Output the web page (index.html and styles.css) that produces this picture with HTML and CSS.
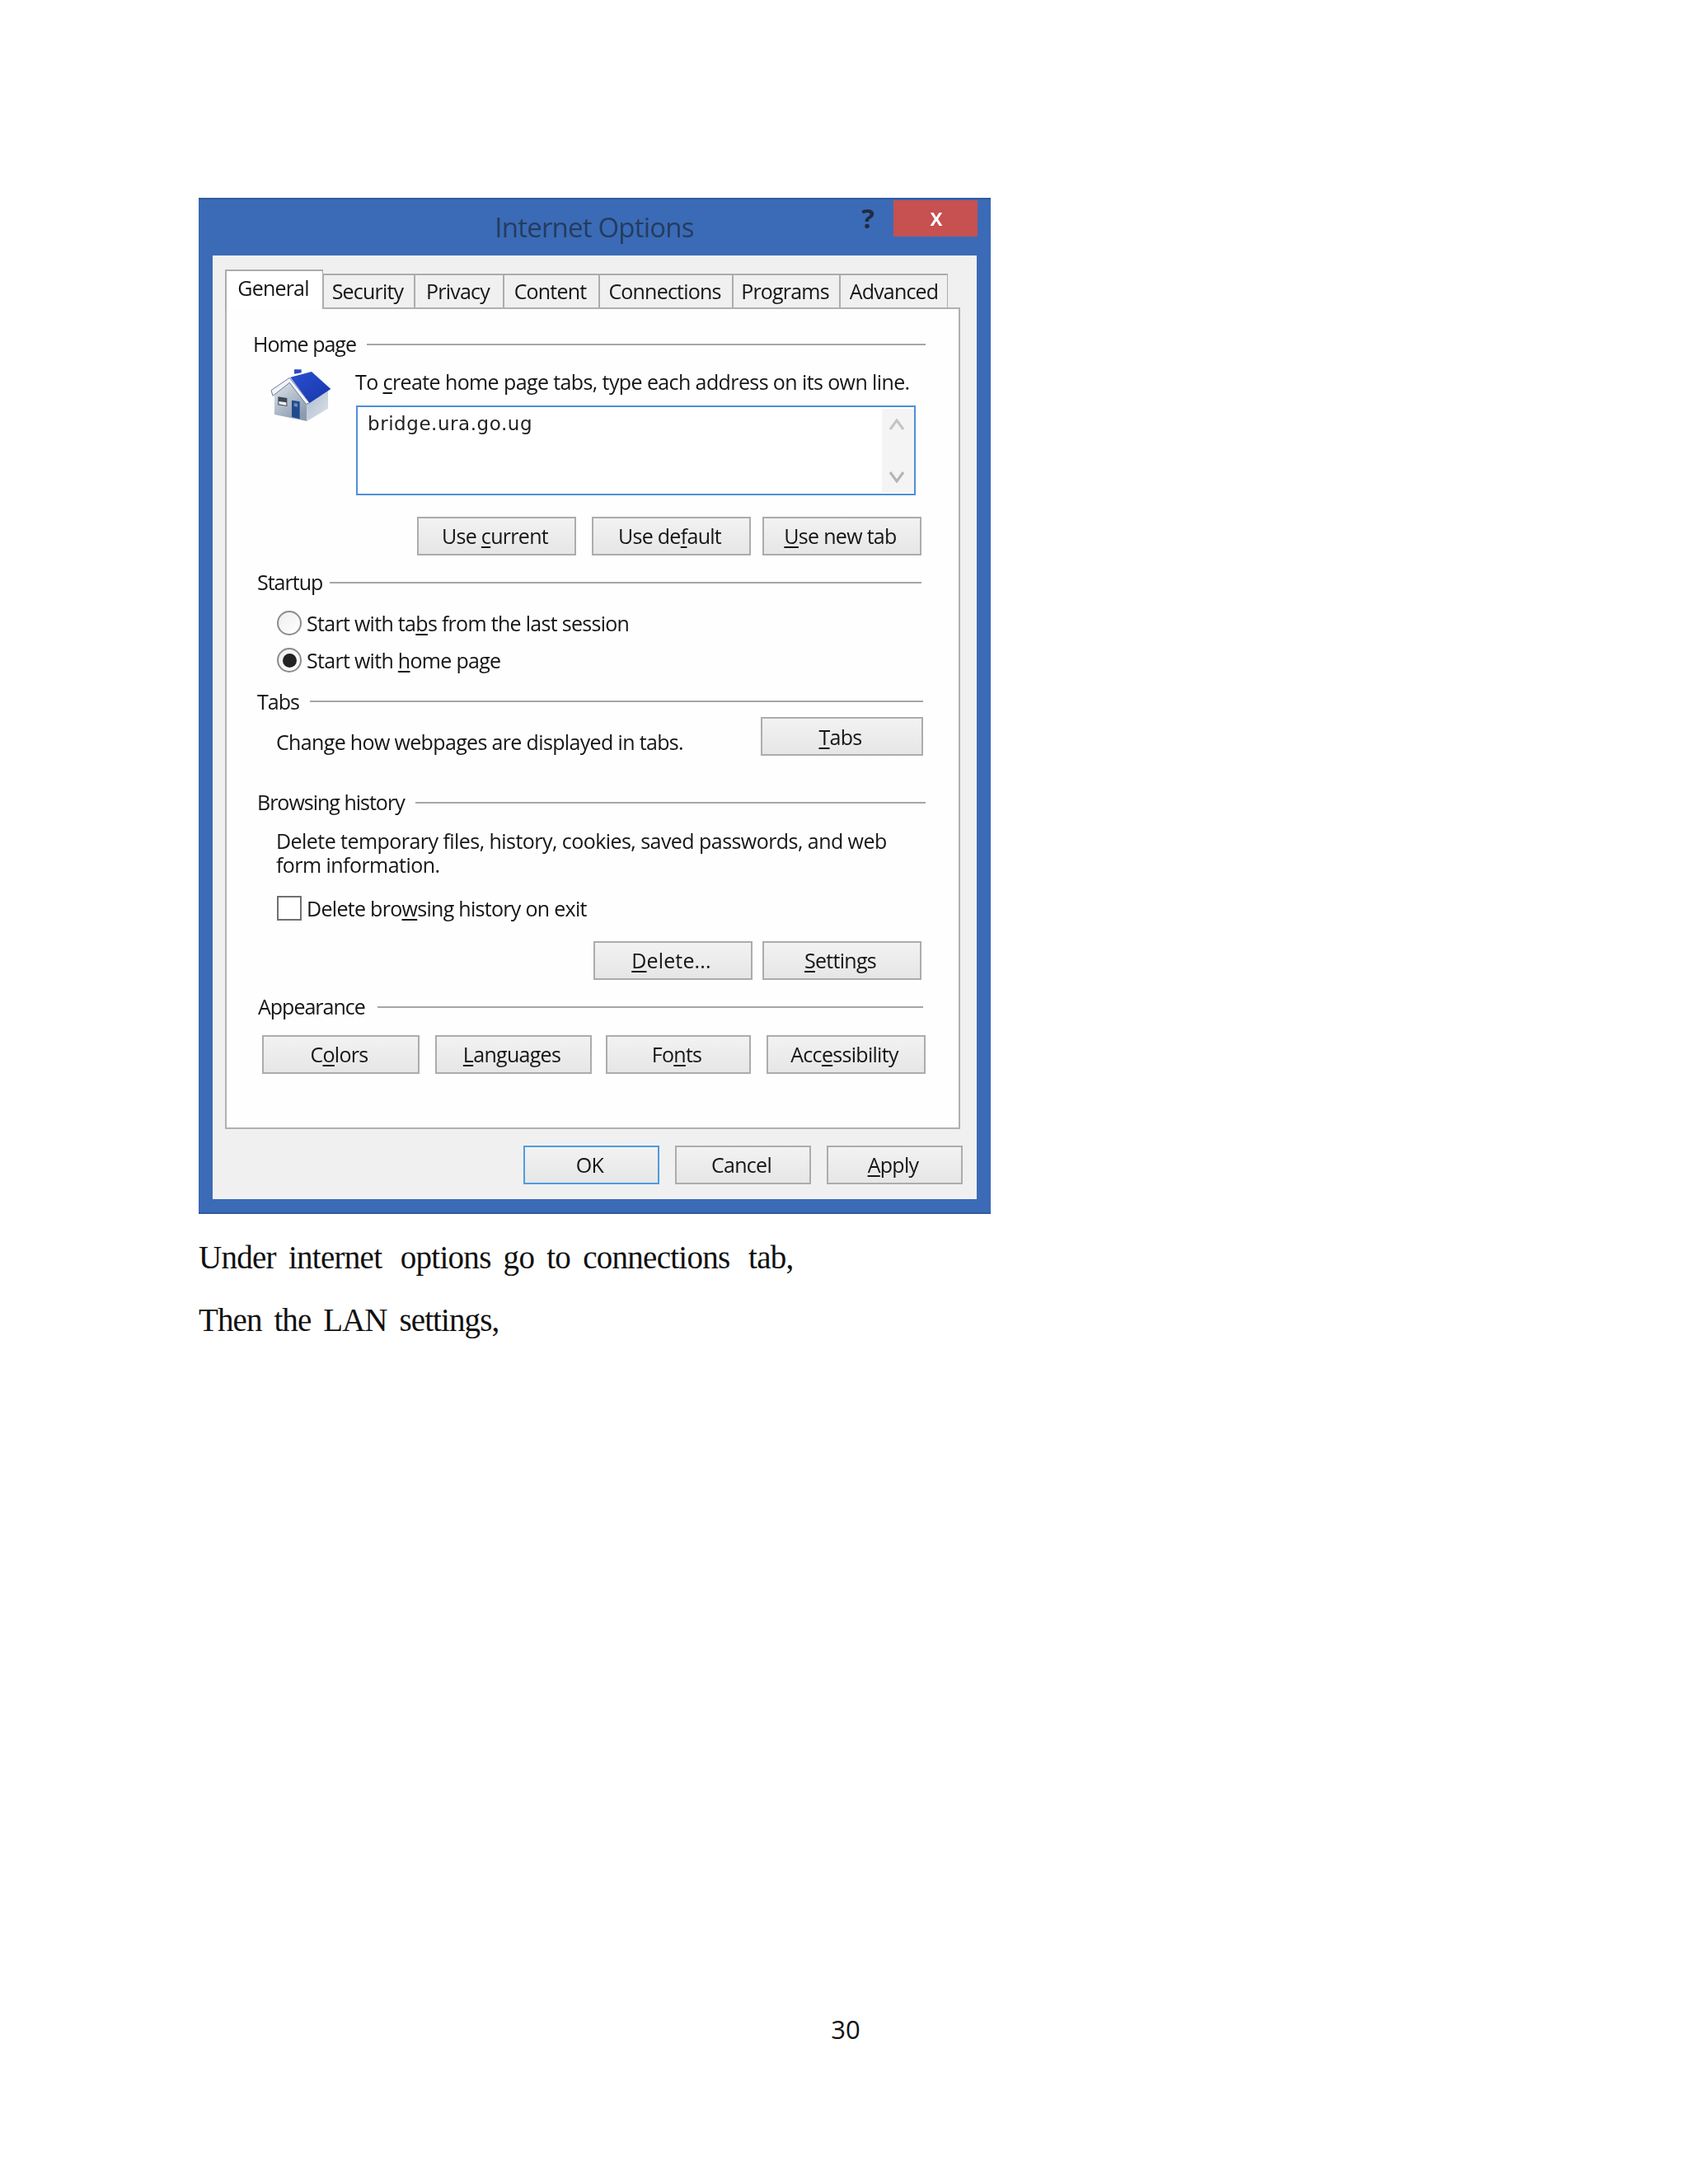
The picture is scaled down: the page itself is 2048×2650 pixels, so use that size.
FILE: index.html
```html
<!DOCTYPE html>
<html lang="en">
<head>
<meta charset="utf-8">
<title>Internet Options</title>
<link rel="stylesheet" href="styles.css">
</head>
<body>
<main class="page">
  <section class="dialog">
    <header class="titlebar">
      <div class="title">Internet Options</div>
      <div class="help">?</div>
      <div class="close">x</div>
    </header>
    <div class="panel">
      <nav class="tabs">
        <div class="tab tab-active tab-general">General</div>
        <div class="tab tab-security">Security</div>
        <div class="tab tab-privacy">Privacy</div>
        <div class="tab tab-content">Content</div>
        <div class="tab tab-connections">Connections</div>
        <div class="tab tab-programs">Programs</div>
        <div class="tab tab-advanced">Advanced</div>
      </nav>
      <div class="pane">
        <div class="legend legend-home"><span>Home page</span><i class="rule"></i></div>
        <div class="home-body">
          <svg class="house" viewBox="85 50 225 195" aria-hidden="true">
            <defs>
              <linearGradient id="wall" x1="0" y1="0" x2="0.6" y2="1"><stop offset="0" stop-color="#e2e7ec"/><stop offset="1" stop-color="#8b9bb0"/></linearGradient>
              <linearGradient id="side" x1="0" y1="0" x2="1" y2="1"><stop offset="0" stop-color="#aebccb"/><stop offset="1" stop-color="#dde3ea"/></linearGradient>
              <linearGradient id="roof" x1="0" y1="0" x2="1" y2="1"><stop offset="0" stop-color="#2a4fd0"/><stop offset="1" stop-color="#1636aa"/></linearGradient>
            </defs>
            <path d="M100 142 155 96 218 172V242L100 218Z" fill="url(#wall)"/>
            <path d="M218 172 295 130V196L218 242Z" fill="url(#side)"/>
            <path d="M88 130 155 84 228 176 215 180 155 102 94 150Z" fill="#f2f4f8" stroke="#6c7c99" stroke-width="3"/>
            <path d="M158 82 235 62 305 125 228 176Z" fill="url(#roof)"/>
            <path d="M172 70V54H198V66Z" fill="#2a4bc0"/>
            <path d="M113 153 146 158V188L113 183Z" fill="#3f4852"/>
            <path d="M116 170 143 174V185L116 180Z" fill="#eceff3"/>
            <path d="M163 166 192 171V234L163 227Z" fill="#1f4b8e"/>
            <path d="M171 176 184 178V190L171 188Z" fill="#6f8fb8"/>
          </svg>
          <div class="home-main">
            <p class="home-hint">To <u>c</u>reate home page tabs, type each address on its own line.</p>
            <div class="address">
              <span class="address-text">bridge.ura.go.ug</span>
              <div class="scroll">
                <svg class="chev" viewBox="0 0 20 14" aria-hidden="true"><path d="M2 13 10 2 18 13" fill="none" stroke="#c4c4c4" stroke-width="3"/></svg>
                <svg class="chev" viewBox="0 0 20 14" aria-hidden="true"><path d="M2 1 10 12 18 1" fill="none" stroke="#b4b4b4" stroke-width="3"/></svg>
              </div>
            </div>
          </div>
        </div>
        <div class="btn-row btn-row-home">
          <div class="btn btn-193 btn-home-first">Use <u>c</u>urrent</div>
          <div class="btn btn-193">Use de<u>f</u>ault</div>
          <div class="btn btn-193"><u>U</u>se new tab</div>
        </div>

        <div class="legend legend-startup"><span>Startup</span><i class="rule"></i></div>
        <div class="option option-first"><i class="radio"></i><span>Start with ta<u>b</u>s from the last session</span></div>
        <div class="option option-second"><i class="radio radio-on"></i><span>Start with <u>h</u>ome page</span></div>

        <div class="legend legend-tabs"><span>Tabs</span><i class="rule"></i></div>
        <div class="tabs-row">
          <p class="tabs-text">Change how webpages are displayed in tabs.</p>
          <div class="btn btn-tabs"><u>T</u>abs</div>
        </div>

        <div class="legend legend-history"><span>Browsing history</span><i class="rule"></i></div>
        <p class="history-text">Delete temporary files, history, cookies, saved passwords, and web<br>form information.</p>
        <div class="option option-check"><i class="check"></i><span>Delete bro<u>w</u>sing history on exit</span></div>
        <div class="btn-row btn-row-history">
          <div class="btn btn-193 btn-delete"><u>D</u>elete...</div>
          <div class="btn btn-193"><u>S</u>ettings</div>
        </div>

        <div class="legend legend-appearance"><span>Appearance</span><i class="rule"></i></div>
        <div class="btn-row btn-row-appearance">
          <div class="btn btn-colors">C<u>o</u>lors</div>
          <div class="btn btn-languages"><u>L</u>anguages</div>
          <div class="btn btn-fonts">Fo<u>n</u>ts</div>
          <div class="btn btn-access">Acc<u>e</u>ssibility</div>
        </div>
      </div>
      <footer class="actions">
        <div class="btn btn-action btn-default">OK</div>
        <div class="btn btn-action">Cancel</div>
        <div class="btn btn-action"><u>A</u>pply</div>
      </footer>
    </div>
  </section>
  <p class="caption caption-first">Under internet<span class="wide-gap"> </span>options go to connections<span class="wide-gap"> </span>tab,</p>
  <p class="caption">Then the LAN settings,</p>
  <div class="page-number">30</div>
</main>
</body>
</html>
```

FILE: styles.css
```css
* { box-sizing: border-box; }
html, body { margin: 0; padding: 0; background: #fff; }
.page { height: 2650px; padding-top: 240px; overflow: hidden; font-family: "Open Sans", sans-serif; color: #161616; }

.dialog { width: 961px; height: 1233px; margin-left: 241px; background: #3b6bb6; border-top: 2px solid #2f5a9c; border-bottom: 2px solid #2f5a9c; filter: blur(0.5px); }
.titlebar { height: 68px; display: flex; align-items: flex-start; padding-left: 18px; padding-right: 16px; }
.title { flex: 1; padding-left: 145px; padding-top: 12px; text-align: center; font-size: 33px; line-height: 44px; letter-spacing: -0.8px; color: #243c60; }
.help { width: 30px; margin-right: 16px; margin-top: 2px; text-align: center; font-size: 33px; line-height: 42px; font-weight: 700; color: #1f2c40; }
.close { width: 102px; height: 44px; margin-top: 1px; padding-left: 2px; background: #c75050; color: #fff; font-size: 28px; line-height: 40px; font-weight: 600; text-align: center; }

.panel { width: 927px; height: 1145px; margin-left: 17px; padding: 17px 0 0 15px; background: #f0f0f0; }
.tabs { display: flex; align-items: flex-end; height: 46px; font-size: 25px; letter-spacing: -0.8px; }
.tab { height: 41px; padding-right: 3px; border: 2px solid #acacac; border-bottom: 0; border-left-width: 1px; border-right-width: 1px; line-height: 38px; text-align: center; background: #f0f0f0; white-space: nowrap; }
.tab-active { height: 48px; margin-bottom: -2px; position: relative; z-index: 1; background: #fff; border-left-width: 2px; border-right-width: 1px; line-height: 40px; }
.tab-general { width: 119px; }
.tab-security { width: 111px; }
.tab-privacy { width: 108px; }
.tab-content { width: 116px; }
.tab-connections { width: 162px; }
.tab-programs { width: 130px; }
.tab-advanced { width: 131px; padding-right: 0; }

.pane { width: 892px; height: 997px; border: 2px solid #b0b0b0; background: #fefefe; font-size: 25px; letter-spacing: -0.55px; padding-top: 28px; }

.legend { display: flex; align-items: center; gap: 13px; height: 30px; white-space: nowrap; letter-spacing: -1px; }
.legend span { margin-top: -3px; }
.rule { flex: 1; height: 2px; background: #a6a6a6; }
.legend-home { margin: 0 40px 0 32px; }
.legend-startup { margin: 18px 45px 0 37px; gap: 9px; }
.legend-tabs { margin: 20px 43px 0 37px; }
.legend-tabs span { margin-top: 0; }
.legend-history { margin: 42px 40px 0 37px; }
.legend-appearance { margin: 18px 43px 0 38px; gap: 15px; }

.home-body { display: flex; height: 168px; padding-left: 53px; }
.house { width: 75px; height: 65px; margin-top: 14px; flex: none; }
.home-main { margin-left: 29px; width: 679px; }
.home-hint { margin: 13px 0 0 -1px; line-height: 34px; white-space: nowrap; letter-spacing: -0.6px; }
.address { display: flex; justify-content: space-between; height: 109px; margin-top: 12px; padding: 2px 0 2px 12px; border: 2px solid #4f8fd6; background: #fff; font-family: "DejaVu Sans", sans-serif; font-size: 23px; letter-spacing: 0.55px; color: #222; }
.address-text { line-height: 36px; }
.scroll { width: 39px; display: flex; flex-direction: column; justify-content: space-between; align-items: center; padding: 12px 3px 11px 0; background: #f4f4f4; }
.chev { width: 20px; height: 14px; display: block; }

.btn { height: 47px; flex: none; padding-right: 4px; border: 2px solid #acacac; background: linear-gradient(#f2f2f2, #e6e6e6); color: #161616; white-space: nowrap; text-align: center; line-height: 43px; letter-spacing: -0.7px; }
.btn-193 { width: 193px; }
.btn-row { display: flex; }
.btn-row-home { justify-content: flex-end; gap: 14px; margin: 26px 45px 0 0; }
.btn-home-first { margin-right: 5px; }
.btn-row-history { justify-content: flex-end; gap: 12px; margin: 25px 45px 0 0; }
.btn-delete { letter-spacing: 0.15px; }
.btn-row-appearance { margin: 19px 0 0 43px; }
.btn-colors { width: 191px; margin-right: 19px; }
.btn-languages { width: 190px; margin-right: 17px; }
.btn-fonts { width: 176px; margin-right: 19px; }
.btn-access { width: 193px; }

.option { display: flex; align-items: flex-start; gap: 6px; height: 30px; margin-left: 61px; white-space: nowrap; letter-spacing: -0.7px; }
.option span { line-height: 30px; }
.option-first { margin-top: 19px; }
.option-second { margin-top: 15px; }
.option-check { margin-top: 23px; }
.radio { width: 30px; height: 30px; flex: none; border: 2px solid #8c8c8c; border-radius: 50%; background: linear-gradient(135deg, #eee, #fff); display: flex; align-items: center; justify-content: center; }
.radio-on::after { content: ""; width: 17px; height: 17px; border-radius: 50%; background: #222; }
.check { width: 30px; height: 30px; flex: none; border: 2px solid #707070; background: #fff; }

.tabs-row { display: flex; justify-content: space-between; margin: 4px 43px 0 60px; }
.tabs-text { margin: 13px 0 0; line-height: 34px; white-space: nowrap; letter-spacing: -0.65px; }
.btn-tabs { width: 197px; line-height: 44px; }
.history-text { margin: 17px 0 0 60px; line-height: 29px; white-space: nowrap; }

.actions { display: flex; justify-content: flex-end; gap: 19px; margin-top: 20px; padding-right: 17px; font-size: 25px; }
.btn-action { width: 165px; }
.btn-default { border-color: #4f9be0; }

u { text-decoration-thickness: 2px; text-underline-offset: 3px; }

.caption { margin: 0 0 0 241px; font-family: "Liberation Serif", serif; font-size: 39px; line-height: 76px; letter-spacing: -0.9px; word-spacing: 6px; white-space: pre; color: #111; }
.caption-first { margin-top: 15px; letter-spacing: -0.72px; }
.wide-gap { word-spacing: 13.5px; }
.page-number { margin-top: 802px; padding-left: 4px; text-align: center; font-size: 31px; line-height: 40px; color: #111; }
```
